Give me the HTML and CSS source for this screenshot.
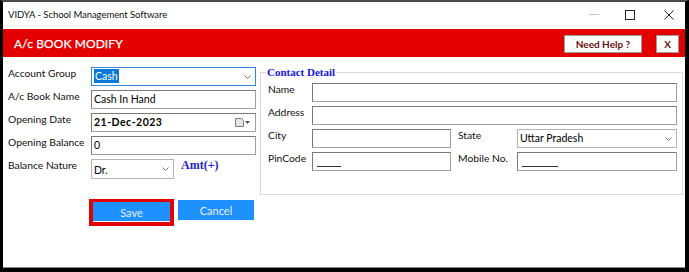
FILE: index.html
```html
<!DOCTYPE html>
<html>
<head>
<meta charset="utf-8">
<link rel="stylesheet" href="styles.css">
</head>
<body>
<div class="window">
  <div class="titlebar">
    <span class="title">VIDYA - School Management Software</span>
    <div class="controls">
      <span class="ctl min"></span>
      <span class="ctl max"></span>
      <span class="ctl close">
        <svg width="10" height="10" viewBox="0 0 10 10"><path d="M0.5 0.5L9.5 9.5M9.5 0.5L0.5 9.5" stroke="#222" stroke-width="1"/></svg>
      </span>
    </div>
  </div>
  <div class="header">
    <span class="htitle">A/c BOOK MODIFY</span>
    <button class="help">Need Help ?</button>
    <button class="hclose">X</button>
  </div>
  <div class="body">
    <div class="left">
      <div class="form">
        <label class="lbl">Account Group</label>
        <div class="ctrl sel focus"><span class="hl">Cash</span><svg class="chev" width="7" height="4" viewBox="0 0 7 4"><path d="M0.5 0.5L3.5 3.5L6.5 0.5" fill="none" stroke="#777" stroke-width="1"/></svg></div>
        <label class="lbl">A/c Book Name</label>
        <div class="ctrl">Cash In Hand</div>
        <label class="lbl">Opening Date</label>
        <div class="ctrl date"><b>21-Dec-2023</b><svg class="cal" width="15" height="9" viewBox="0 0 15 9"><path d="M0.5 0.5H6.5L8.5 2.5V8.5H0.5Z" fill="#e4e4e4" stroke="#7a7a7a"/><path d="M10 3H15L12.5 6Z" fill="#555"/></svg></div>
        <label class="lbl">Opening Balance</label>
        <div class="ctrl">0</div>
        <label class="lbl">Balance Nature</label>
        <div class="nature">
          <div class="ctrl sel short">Dr.<svg class="chev" width="7" height="4" viewBox="0 0 7 4"><path d="M0.5 0.5L3.5 3.5L6.5 0.5" fill="none" stroke="#777" stroke-width="1"/></svg></div>
          <span class="amt">Amt(+)</span>
        </div>
      </div>
      <div class="buttons">
        <div class="save-ring"><button class="btn save">Save</button></div>
        <button class="btn cancel">Cancel</button>
      </div>
    </div>
    <fieldset class="contact">
      <legend>Contact Detail</legend>
      <div class="cgrid">
        <label class="lbl">Name</label>
        <div class="ctrl wide"></div>
        <label class="lbl">Address</label>
        <div class="ctrl wide"></div>
        <label class="lbl">City</label>
        <div class="ctrl"></div>
        <label class="lbl lbl2">State</label>
        <div class="ctrl sel">Uttar Pradesh<svg class="chev" width="7" height="4" viewBox="0 0 7 4"><path d="M0.5 0.5L3.5 3.5L6.5 0.5" fill="none" stroke="#777" stroke-width="1"/></svg></div>
        <label class="lbl">PinCode</label>
        <div class="ctrl mask"><span class="m1"></span></div>
        <label class="lbl lbl2">Mobile No.</label>
        <div class="ctrl mask"><span class="m2"></span></div>
      </div>
    </fieldset>
  </div>
</div>
</body>
</html>
```

FILE: styles.css
```css
* { box-sizing: border-box; }
html, body { margin: 0; padding: 0; background: #fff; }
body { font-family: Lato, "Noto Sans", sans-serif; color: #000; }

.window {
  width: 689px;
  height: 272px;
  border-top: 2px solid #4a4a4a;
  border-left: 3px solid #000;
  border-right: 4px solid #000;
  border-bottom: 4px solid #000;
  box-shadow: inset 0 -1px 0 #8a8a8a;
  display: flex;
  flex-direction: column;
  overflow: hidden;
}

.titlebar {
  height: 27px;
  display: flex;
  align-items: center;
  padding-left: 5px;
  flex: none;
}
.title {
  font-size: 9.5px;
  letter-spacing: -0.05px;
  color: #111;
  margin-top: -2px;
}
.controls {
  margin-left: auto;
  display: flex;
  align-items: center;
  margin-top: -2px;
}
.ctl { display: block; }
.min { width: 10px; height: 1px; background: #c8c8c8; margin-right: 26px; }
.max { width: 10px; height: 10px; border: 1px solid #222; margin-right: 29px; }
.close { width: 10px; height: 10px; margin-right: 11px; }
.close svg { display: block; }

.header {
  height: 28px;
  flex: none;
  background: #e20000;
  display: flex;
  align-items: center;
  padding-left: 11px;
  padding-right: 6px;
}
.htitle {
  color: #fff;
  font-size: 12px;
  font-weight: 400;
  letter-spacing: 0.1px;
  -webkit-text-stroke: 0.25px #fff;
}
.help, .hclose {
  font-family: Lato, "Noto Sans", sans-serif;
  background: #fff;
  border: 1px solid #9a9a9a;
  color: #6a0f0f;
  font-weight: 700;
  font-size: 10px;
  height: 18px;
  padding: 0;
  margin-top: 2px;
}
.help { margin-left: auto; width: 78px; }
.hclose { width: 23px; margin-left: 14px; font-size: 10px; }

.body {
  flex: 1;
  display: flex;
  padding-top: 9px;
  padding-left: 5px;
}

.left { width: 248px; flex: none; }
.form {
  display: grid;
  grid-template-columns: 83px 165px;
  grid-auto-rows: 19px;
  row-gap: 4px;
  margin-top: 1px;
}
.lbl {
  font-size: 10.3px;
  line-height: 12px;
  color: #111;
  white-space: nowrap;
}
.ctrl {
  position: relative;
  height: 19px;
  border: 1px solid #a0a0a0;
  border-top-color: #7a7a7a;
  border-left-color: #7a7a7a;
  background: #fff;
  font-size: 10.5px;
  line-height: 17px;
  padding-left: 2px;
  white-space: nowrap;
}
.ctrl.sel { border-color: #b4b4b4; }
.ctrl.focus { border-color: #2f8ae0; }
.hl { background: #0a78d7; color: #fff; padding: 1px 1px; }
.chev { position: absolute; right: 4px; top: 7px; }
.date b { font-weight: 700; letter-spacing: 0.5px; }
.cal { position: absolute; right: 5px; top: 4px; }
.nature { display: flex; align-items: flex-start; }
.short { width: 83px; height: 20px; line-height: 20px; }
.amt {
  font-family: "Liberation Serif", serif;
  font-weight: 700;
  font-size: 12px;
  color: #2222cc;
  margin-left: 7px;
  line-height: 12px;
}

.buttons {
  display: flex;
  align-items: flex-start;
  margin-top: 21px;
  margin-left: 81px;
}
.save-ring {
  border: 4px solid #e20000;
  border-top-width: 3px;
  border-bottom-width: 4px;
}
.btn {
  font-family: Lato, "Noto Sans", sans-serif;
  font-size: 11px;
  color: #e8f0ff;
  background: #1e90ff;
  border: none;
  padding: 0;
  display: block;
}
.save { width: 77px; height: 20px; box-shadow: inset 0 -1px 0 #fff; }
.cancel { width: 76px; height: 20px; margin-left: 4px; margin-top: 1px; }

.contact {
  margin: 0 2px 0 4px;
  flex: 1;
  height: 129px;
  border: 1px solid #dadada;
  padding: 5px 5px 0 7px;
}
.contact legend {
  font-family: "Liberation Serif", serif;
  font-weight: 700;
  font-size: 11px;
  line-height: 12px;
  color: #1515e0;
  padding: 0 1px;
  margin-left: -2px;
}
.cgrid {
  display: grid;
  grid-template-columns: 44px 139px 66px 160px;
  grid-auto-rows: 19px;
  row-gap: 4px;
}
.cgrid .wide { grid-column: 2 / 5; }
.cgrid .lbl2 { padding-left: 7px; }
.mask span {
  position: absolute;
  left: 4px;
  bottom: 3px;
  height: 1px;
  background: #333;
}
.m1 { width: 24px; }
.m2 { width: 36px; }
```
